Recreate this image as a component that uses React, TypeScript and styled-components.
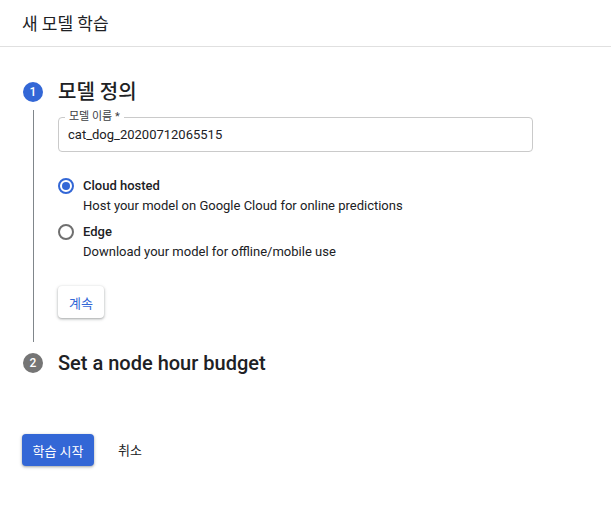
import React, { useState } from "react";
import styled, { createGlobalStyle } from "styled-components";

const Global = createGlobalStyle`
  html, body { margin: 0; padding: 0; background: #fff; }
  body {
    font-family: Roboto, "Noto Sans CJK KR", sans-serif;
    color: #202124;
    -webkit-font-smoothing: antialiased;
  }
  * { box-sizing: border-box; }
`;

const Page = styled.div`
  width: 611px;
  min-height: 508px;
`;

const Header = styled.header`
  height: 47px;
  border-bottom: 1px solid #e0e0e0;
  display: flex;
  align-items: center;
  padding: 0 22px 2px;
  font-size: 17px;
  font-weight: 400;
`;

const Main = styled.main`
  padding: 35px 0 0 23px;
`;

const StepHead = styled.div`
  display: flex;
  align-items: center;
  gap: 15px;
  height: 20px;
`;

const StepNum = styled.span<{ $active?: boolean }>`
  width: 20px;
  height: 20px;
  border-radius: 50%;
  background: ${(p) => (p.$active ? "#3367d6" : "#757575")};
  color: #fff;
  font-size: 12px;
  font-weight: 500;
  display: flex;
  align-items: center;
  justify-content: center;
  flex-shrink: 0;
`;

const StepTitle = styled.h2`
  margin: 0;
  font-size: 20px;
  font-weight: 500;
  line-height: 20px;
`;

const StepBody = styled.div`
  margin: 8px 0 11px 10px;
  border-left: 1px solid #80868b;
  padding: 7px 0 24px 24px;
`;

const Field = styled.div`
  position: relative;
  width: 475px;
  height: 35px;
  border: 1px solid #cacaca;
  border-radius: 4px;
  display: flex;
  align-items: center;
  padding: 0 9px 1px;
`;

const FieldLabel = styled.label`
  position: absolute;
  top: -8px;
  left: 6px;
  padding: 0 4px;
  background: #fff;
  font-size: 11px;
  line-height: 14px;
  color: #3c4043;
`;

const FieldValue = styled.span`
  font-size: 13px;
  color: #202124;
`;

const Options = styled.div`
  margin-top: 24px;
  display: flex;
  flex-direction: column;
  gap: 6px;
`;

const Option = styled.div`
  display: grid;
  grid-template-columns: 16px 1fr;
  column-gap: 9px;
  cursor: pointer;
`;

const Radio = styled.span<{ $checked?: boolean }>`
  width: 16px;
  height: 16px;
  margin-top: 2px;
  border-radius: 50%;
  border: 2px solid ${(p) => (p.$checked ? "#3367d6" : "#6f6f6f")};
  display: flex;
  align-items: center;
  justify-content: center;
  &::after {
    content: "";
    width: 8px;
    height: 8px;
    border-radius: 50%;
    background: ${(p) => (p.$checked ? "#3367d6" : "transparent")};
  }
`;

const OptionTitle = styled.div`
  font-size: 13px;
  font-weight: 500;
  line-height: 20px;
`;

const OptionDesc = styled.div`
  grid-column: 2;
  font-size: 13px;
  line-height: 20px;
  color: #202124;
`;

const ContinueButton = styled.button`
  margin-top: 24px;
  height: 32px;
  padding: 0 11px;
  border: none;
  border-radius: 4px;
  background: #fff;
  color: #3367d6;
  font-family: inherit;
  font-size: 13px;
  box-shadow: 0 1px 2px rgba(60, 64, 67, 0.3), 0 1px 3px 1px rgba(60, 64, 67, 0.15);
  cursor: pointer;
`;

const Actions = styled.div`
  margin-top: 61px;
  padding-left: 22px;
  display: flex;
  align-items: center;
  gap: 16px;
`;

const PrimaryButton = styled.button`
  height: 32px;
  width: 72px;
  border: none;
  border-radius: 4px;
  background: #3367d6;
  color: #fff;
  font-family: inherit;
  font-size: 13px;
  box-shadow: 0 1px 2px rgba(60, 64, 67, 0.3), 0 1px 3px 1px rgba(60, 64, 67, 0.15);
  cursor: pointer;
`;

const TextButton = styled.button`
  height: 32px;
  padding: 0 8px 2px;
  border: none;
  background: transparent;
  color: #202124;
  font-family: inherit;
  font-size: 13px;
  cursor: pointer;
`;

export default function App() {
  const [choice, setChoice] = useState<"cloud" | "edge">("cloud");
  return (
    <Page>
      <Global />
      <Header>새 모델 학습</Header>
      <Main>
        <StepHead>
          <StepNum $active>1</StepNum>
          <StepTitle>모델 정의</StepTitle>
        </StepHead>
        <StepBody>
          <Field>
            <FieldLabel>모델 이름 *</FieldLabel>
            <FieldValue>cat_dog_20200712065515</FieldValue>
          </Field>
          <Options>
            <Option onClick={() => setChoice("cloud")}>
              <Radio $checked={choice === "cloud"} />
              <OptionTitle>Cloud hosted</OptionTitle>
              <OptionDesc>Host your model on Google Cloud for online predictions</OptionDesc>
            </Option>
            <Option onClick={() => setChoice("edge")}>
              <Radio $checked={choice === "edge"} />
              <OptionTitle>Edge</OptionTitle>
              <OptionDesc>Download your model for offline/mobile use</OptionDesc>
            </Option>
          </Options>
          <ContinueButton>계속</ContinueButton>
        </StepBody>
        <StepHead>
          <StepNum>2</StepNum>
          <StepTitle>Set a node hour budget</StepTitle>
        </StepHead>
      </Main>
      <Actions>
        <PrimaryButton>학습 시작</PrimaryButton>
        <TextButton>취소</TextButton>
      </Actions>
    </Page>
  );
}
